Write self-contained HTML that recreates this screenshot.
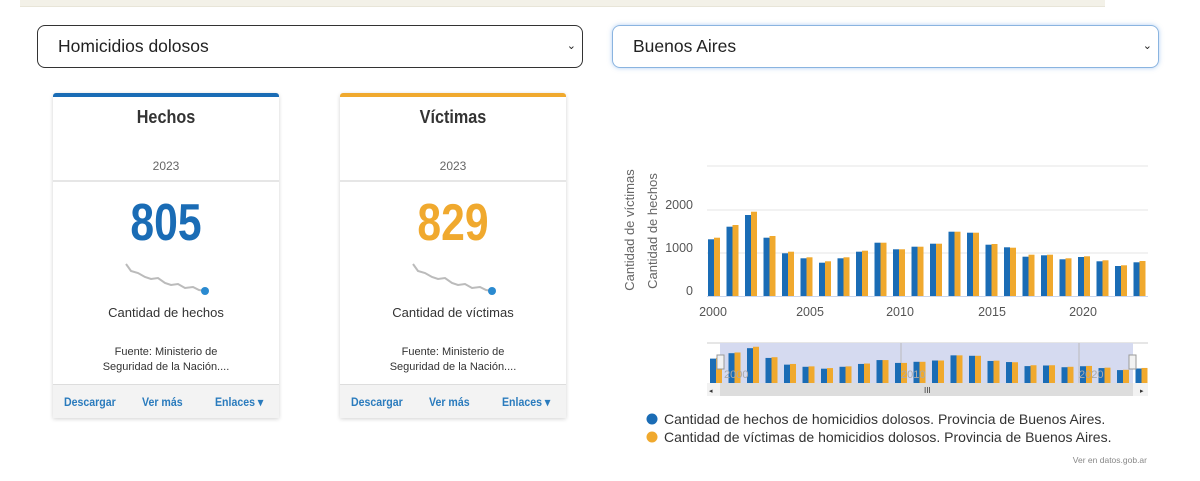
<!DOCTYPE html>
<html><head><meta charset="utf-8"><style>
*{box-sizing:border-box;margin:0;padding:0}
body{width:1200px;height:481px;background:#fff;font-family:"Liberation Sans",sans-serif;position:relative;overflow:hidden;color:#333}
.abs{position:absolute}
.sel{position:absolute;top:25px;height:43px;border:1px solid #333;border-radius:8px;font-size:17.5px;padding-left:20px;line-height:41px;color:#222}
.sel span{position:absolute;right:6px;top:0;font-size:11px}
.card{position:absolute;top:93px;width:226px;height:325px;background:#fff;box-shadow:0 1px 4px rgba(0,0,0,.18);border-radius:4px 4px 0 0;text-align:center}
.bar{height:4px;border-radius:3px 3px 0 0}
.t{position:absolute;top:14px;width:100%;font-size:18px;font-weight:bold;color:#333;transform:scaleX(.9)}
.y{position:absolute;top:66px;width:100%;font-size:12px;color:#666}
.div{position:absolute;top:87px;width:100%;border-top:2px solid #e6e6e6}
.n{position:absolute;top:100px;width:100%;font-size:52px;font-weight:bold;transform:scaleX(.82)}
.l{position:absolute;top:212px;width:100%;font-size:13px;color:#333}
.s{position:absolute;top:252px;width:100%;font-size:11px;line-height:15px;color:#333}
.f{position:absolute;top:291px;height:34px;width:100%;background:#f3f3f3;border-top:1px solid #ddd;font-size:11.5px;font-weight:bold;color:#2a7bbd;line-height:36px}
.f b{position:absolute;transform:scaleX(.92);transform-origin:left}
</style></head><body>
<div class="abs" style="left:20px;top:0;width:1085px;height:7px;background:#f3f1e8;border-bottom:1px solid #e8e5d8"></div>
<div class="sel" style="left:37px;width:546px">Homicidios dolosos<span>⌄</span></div>
<div class="sel" style="left:612px;width:547px;border-color:#8ab4e0;box-shadow:0 0 5px rgba(100,160,230,.5)">Buenos Aires<span>⌄</span></div>

<div class="card" style="left:53px"><div class="bar" style="background:#1a6cb5"></div>
<div class="t">Hechos</div><div class="y">2023</div><div class="div"></div>
<div class="n" style="color:#1a6cb5">805</div>
<svg class="abs" style="left:70px;top:168px" width="90" height="35"><path d="M3 3 L8 10 L15 12 L22 16 L28 18 L35 17 L42 22 L48 24 L55 23 L62 27 L70 26 L76 29 L82 30" fill="none" stroke="#bbb" stroke-width="2"/><circle cx="82" cy="30" r="4" fill="#2a8ad0"/></svg>
<div class="l">Cantidad de hechos</div>
<div class="s">Fuente: Ministerio de<br>Seguridad de la Nación....</div>
<div class="f"><b style="left:11px">Descargar</b><b style="left:89px">Ver más</b><b style="left:162px">Enlaces ▾</b></div></div>

<div class="card" style="left:340px"><div class="bar" style="background:#f0a92e"></div>
<div class="t">Víctimas</div><div class="y">2023</div><div class="div"></div>
<div class="n" style="color:#f0a92e">829</div>
<svg class="abs" style="left:70px;top:168px" width="90" height="35"><path d="M3 3 L8 10 L15 12 L22 16 L28 18 L35 17 L42 22 L48 24 L55 23 L62 27 L70 26 L76 29 L82 30" fill="none" stroke="#bbb" stroke-width="2"/><circle cx="82" cy="30" r="4" fill="#2a8ad0"/></svg>
<div class="l">Cantidad de víctimas</div>
<div class="s">Fuente: Ministerio de<br>Seguridad de la Nación....</div>
<div class="f"><b style="left:11px">Descargar</b><b style="left:89px">Ver más</b><b style="left:162px">Enlaces ▾</b></div></div>

<svg id="ch" class="abs" style="left:0;top:0" width="1200" height="481" font-family="Liberation Sans">
<g stroke="#e6e6e6"><line x1="707" y1="166" x2="1148" y2="166"/><line x1="707" y1="210" x2="1148" y2="210"/><line x1="707" y1="253" x2="1148" y2="253"/></g>
<line x1="707" y1="296.5" x2="1148" y2="296.5" stroke="#ccd6eb"/>
<g fill="#555" font-size="12.5" text-anchor="end"><text x="693" y="209">2000</text><text x="693" y="252">1000</text><text x="693" y="295">0</text></g>
<g fill="#555" font-size="12.5" text-anchor="middle"><text x="713" y="316">2000</text><text x="810" y="316">2005</text><text x="900" y="316">2010</text><text x="992" y="316">2015</text><text x="1083" y="316">2020</text></g>
<g fill="#666" font-size="13" text-anchor="middle"><text transform="translate(634,230) rotate(-90)">Cantidad de víctimas</text><text transform="translate(657,231) rotate(-90)">Cantidad de hechos</text></g>
<line x1="707" y1="343" x2="1148" y2="343" stroke="#ccc"/>
<rect x="720" y="343" width="413" height="40" fill="#d5daf0"/>
<g stroke="#bbb"><line x1="901" y1="343" x2="901" y2="383"/><line x1="1079" y1="343" x2="1079" y2="383"/></g>
<g id="bars"></g><g id="mini"></g>
<g fill="#aaa" font-size="11"><text x="724" y="378">2000</text><text x="901" y="378">2010</text><text x="1079" y="378">2020</text></g>
<rect x="717" y="355" width="7" height="14" fill="#f2f2f2" stroke="#999"/><rect x="1129" y="355" width="7" height="14" fill="#f2f2f2" stroke="#999"/>
<rect x="707" y="383" width="441" height="13" fill="#f2f2f2"/><rect x="720" y="383" width="413" height="13" fill="#ddd"/>
<text x="924" y="393" font-size="8" fill="#333">III</text><text x="709" y="393" font-size="7" fill="#333">◂</text><text x="1140" y="393" font-size="7" fill="#333">▸</text>
<circle cx="652" cy="419" r="5.5" fill="#1a6cb5"/><circle cx="652" cy="437" r="5.5" fill="#f0a92e"/>
<g font-size="14" fill="#333"><text x="664" y="424">Cantidad de hechos de homicidios dolosos. Provincia de Buenos Aires.</text><text x="664" y="442">Cantidad de víctimas de homicidios dolosos. Provincia de Buenos Aires.</text></g>
<text x="1147" y="463" font-size="8.5" fill="#888" text-anchor="end">Ver en datos.gob.ar</text>
</svg>
<script>
var b=[239.3,226.7,215,237.7,253.3,258.3,262.7,258.3,251.7,242.7,249.3,246.7,243.7,231.7,232.7,244.7,247.3,256.7,255.3,259.3,257,261.3,266,262.3];
var o=[237.7,225,211.7,236,251.7,257.3,261.3,257.3,250.7,242.7,249.3,246.7,243.7,231.7,232.7,244,247.7,254.7,254.7,258.3,256.3,260.3,265.3,261];
var s='',m='';
for(var i=0;i<24;i++){var x=708+18.5*i;
s+='<rect x="'+x+'" y="'+b[i]+'" width="6" height="'+(296-b[i])+'" fill="#1a6cb5"/><rect x="'+(x+6)+'" y="'+o[i]+'" width="6" height="'+(296-o[i])+'" fill="#f0a92e"/>';
var hb=(296-b[i])*0.43,ho=(296-o[i])*0.43;
m+='<rect x="'+(x+2)+'" y="'+(383-hb)+'" width="6" height="'+hb+'" fill="#1a6cb5"/><rect x="'+(x+8)+'" y="'+(383-ho)+'" width="6" height="'+ho+'" fill="#f0a92e"/>';}
document.getElementById('bars').innerHTML=s;document.getElementById('mini').innerHTML=m;
</script>
</body></html>
